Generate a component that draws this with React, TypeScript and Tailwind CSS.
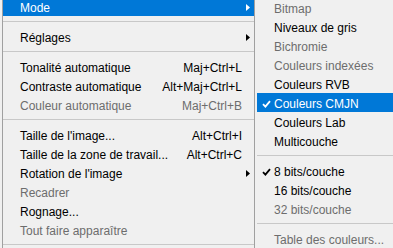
type Item =
  | { kind: 'sep' }
  | {
      kind?: 'item'
      label: string
      shortcut?: string
      sub?: boolean
      disabled?: boolean
      active?: boolean
      checked?: boolean
    }

const leftMenu: Item[] = [
  { label: 'Mode', sub: true, active: true },
  { kind: 'sep' },
  { label: 'Réglages', sub: true },
  { kind: 'sep' },
  { label: 'Tonalité automatique', shortcut: 'Maj+Ctrl+L' },
  { label: 'Contraste automatique', shortcut: 'Alt+Maj+Ctrl+L' },
  { label: 'Couleur automatique', shortcut: 'Maj+Ctrl+B', disabled: true },
  { kind: 'sep' },
  { label: "Taille de l'image...", shortcut: 'Alt+Ctrl+I' },
  { label: 'Taille de la zone de travail...', shortcut: 'Alt+Ctrl+C' },
  { label: "Rotation de l'image", sub: true },
  { label: 'Recadrer', disabled: true },
  { label: 'Rognage...' },
  { label: 'Tout faire apparaître', disabled: true },
  { kind: 'sep' },
]

const modeMenu: Item[] = [
  { label: 'Bitmap', disabled: true },
  { label: 'Niveaux de gris' },
  { label: 'Bichromie', disabled: true },
  { label: 'Couleurs indexées', disabled: true },
  { label: 'Couleurs RVB' },
  { label: 'Couleurs CMJN', active: true, checked: true },
  { label: 'Couleurs Lab' },
  { label: 'Multicouche' },
  { kind: 'sep' },
  { label: '8 bits/couche', checked: true },
  { label: '16 bits/couche' },
  { label: '32 bits/couche', disabled: true },
  { kind: 'sep' },
  { label: 'Table des couleurs...', disabled: true },
]

function Check() {
  return (
    <svg width="9" height="8" viewBox="0 0 9 8" className="shrink-0">
      <path d="M1 4.2 L3.4 6.6 L8 1.2" fill="none" stroke="currentColor" strokeWidth="1.8" />
    </svg>
  )
}

function Arrow() {
  return (
    <svg width="4" height="7" viewBox="0 0 4 7" className="shrink-0">
      <path d="M0 0 L4 3.5 L0 7 Z" fill="currentColor" />
    </svg>
  )
}

function MenuRows({ items }: { items: Item[] }) {
  return (
    <>
      {items.map((it, i) => {
        if (it.kind === 'sep') {
          return (
            <div key={i} className="flex h-[11px] items-center">
              <div className="h-px w-full bg-[#c8c8c8]" />
            </div>
          )
        }
        const color = it.active ? 'bg-[#0078d7] text-white' : it.disabled ? 'text-[#6d6d6d]' : 'text-black'
        return (
          <div key={i} className={`flex h-[19px] items-center pt-[2px] ${color}`}>
            <div className="flex w-[17px] justify-center pl-[1px]">{it.checked && <Check />}</div>
            <span className="flex-1 whitespace-nowrap">{it.label}</span>
            {it.shortcut && <span className="mr-[12px] whitespace-nowrap">{it.shortcut}</span>}
            {it.sub && (
              <div className="mr-[4px] flex">
                <Arrow />
              </div>
            )}
          </div>
        )
      })}
    </>
  )
}

export default function App() {
  return (
    <div className="h-[248px] w-[393px] overflow-hidden bg-[#f0f0f0] text-[12px] leading-none [font-family:'Liberation_Sans',Arial,sans-serif]">
      <div className="flex">
        <div className="ml-[2px] -mt-[3px] w-[252px] border-l border-[#a0a0a0]">
          <MenuRows items={leftMenu} />
        </div>
        <div className="-mt-[2px] flex-1 border-l border-[#a0a0a0] pl-[2px]">
          <MenuRows items={modeMenu} />
        </div>
      </div>
    </div>
  )
}
